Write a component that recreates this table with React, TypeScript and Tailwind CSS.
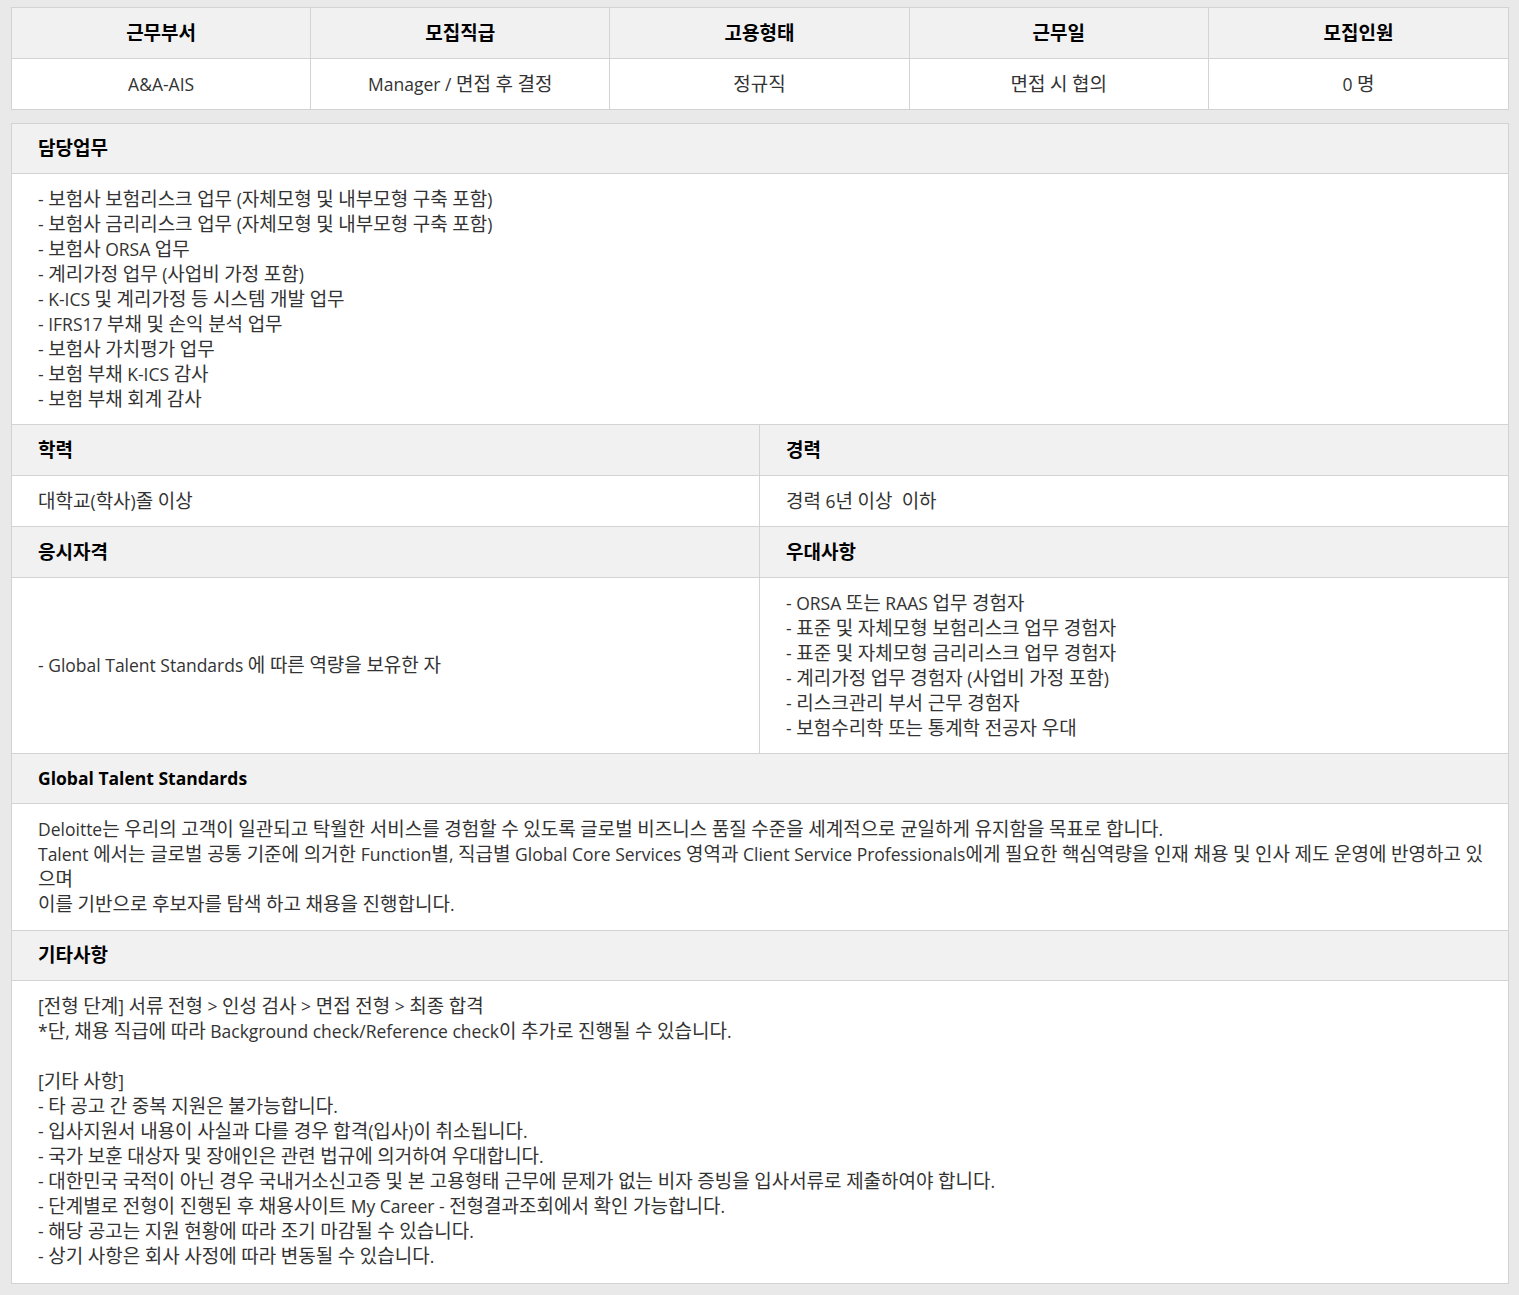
import React from 'react';

const font = { fontFamily: '"Open Sans", "Noto Sans CJK KR", sans-serif' };

const topHeads = ['근무부서', '모집직급', '고용형태', '근무일', '모집인원'];
const topValues = ['A&A-AIS', 'Manager / 면접 후 결정', '정규직', '면접 시 협의', '0 명'];

const duties = [
  '- 보험사 보험리스크 업무 (자체모형 및 내부모형 구축 포함)',
  '- 보험사 금리리스크 업무 (자체모형 및 내부모형 구축 포함)',
  '- 보험사 ORSA 업무',
  '- 계리가정 업무 (사업비 가정 포함)',
  '- K-ICS 및 계리가정 등 시스템 개발 업무',
  '- IFRS17 부채 및 손익 분석 업무',
  '- 보험사 가치평가 업무',
  '- 보험 부채 K-ICS 감사',
  '- 보험 부채 회계 감사',
];

const prefs = [
  '- ORSA 또는 RAAS 업무 경험자',
  '- 표준 및 자체모형 보험리스크 업무 경험자',
  '- 표준 및 자체모형 금리리스크 업무 경험자',
  '- 계리가정 업무 경험자 (사업비 가정 포함)',
  '- 리스크관리 부서 근무 경험자',
  '- 보험수리학 또는 통계학 전공자 우대',
];

const gts = [
  'Deloitte는 우리의 고객이 일관되고 탁월한 서비스를 경험할 수 있도록 글로벌 비즈니스 품질 수준을 세계적으로 균일하게 유지함을 목표로 합니다.',
  'Talent 에서는 글로벌 공통 기준에 의거한 Function별, 직급별 Global Core Services 영역과 Client Service Professionals에게 필요한 핵심역량을 인재 채용 및 인사 제도 운영에 반영하고 있',
  '으며',
  '이를 기반으로 후보자를 탐색 하고 채용을 진행합니다.',
];

const etc = [
  '[전형 단계] 서류 전형 > 인성 검사 > 면접 전형 > 최종 합격',
  '*단, 채용 직급에 따라 Background check/Reference check이 추가로 진행될 수 있습니다.',
  '',
  '[기타 사항]',
  '- 타 공고 간 중복 지원은 불가능합니다.',
  '- 입사지원서 내용이 사실과 다를 경우 합격(입사)이 취소됩니다.',
  '- 국가 보훈 대상자 및 장애인은 관련 법규에 의거하여 우대합니다.',
  '- 대한민국 국적이 아닌 경우 국내거소신고증 및 본 고용형태 근무에 문제가 없는 비자 증빙을 입사서류로 제출하여야 합니다.',
  '- 단계별로 전형이 진행된 후 채용사이트 My Career - 전형결과조회에서 확인 가능합니다.',
  '- 해당 공고는 지원 현황에 따라 조기 마감될 수 있습니다.',
  '- 상기 사항은 회사 사정에 따라 변동될 수 있습니다.',
];

// hangul glyphs in the shot are larger than the latin ones, so size them apart
const K = (text: string) =>
  text.split(/([\uAC00-\uD7A3\u3131-\u318E]+)/).map((part, i) =>
    i % 2 === 1 ? (
      <span key={i} className="text-[19px] leading-none">{part}</span>
    ) : (
      part
    )
  );

const Head: React.FC<{ text: string; className?: string }> = ({ text, className = '' }) => (
  <div className={`bg-[#f1f1f1] h-[50px] flex items-center px-[26px] font-bold text-black ${className}`}>
    <span>{K(text)}</span>
  </div>
);

const Lines: React.FC<{ lines: string[]; className?: string }> = ({ lines, className = 'py-[12.5px]' }) => (
  <div className={`px-[26px] ${className}`}>
    {lines.map((l, i) => (
      <div key={i} className="h-[25px] whitespace-nowrap">{K(l)}</div>
    ))}
  </div>
);

const App: React.FC = () => {
  return (
    <div style={font} className="bg-[#e8e9e8] min-h-[1295px] pl-[11px] pr-[10px] pt-[7px] pb-[12px] text-[17.5px] leading-[25px] text-[#333]">
      <div className="border border-[#d3d3d3] bg-white">
        <div className="grid grid-cols-5 border-b border-[#d3d3d3]">
          {topHeads.map((h, i) => (
            <div key={h} className={`bg-[#f1f1f1] h-[50px] flex items-center justify-center font-bold text-black ${i < 4 ? 'border-r border-[#d3d3d3]' : ''}`}>
              <span>{K(h)}</span>
            </div>
          ))}
        </div>
        <div className="grid grid-cols-5">
          {topValues.map((v, i) => (
            <div key={v} className={`h-[50px] flex items-center justify-center ${i < 4 ? 'border-r border-[#d3d3d3]' : ''}`}>
              <span>{K(v)}</span>
            </div>
          ))}
        </div>
      </div>

      <div className="mt-[13px] border border-[#d3d3d3] bg-white">
        <Head text="담당업무" className="border-b border-[#d3d3d3]" />
        <div className="border-b border-[#d3d3d3]">
          <Lines lines={duties} />
        </div>

        <div className="grid grid-cols-2 border-b border-[#d3d3d3]">
          <Head text="학력" className="border-r border-[#d3d3d3]" />
          <Head text="경력" />
        </div>
        <div className="grid grid-cols-2 border-b border-[#d3d3d3]">
          <div className="h-[50px] flex items-center px-[26px] border-r border-[#d3d3d3]"><span>{K('대학교(학사)졸 이상')}</span></div>
          <div className="h-[50px] flex items-center px-[26px] whitespace-pre"><span>{K('경력 6년 이상  이하')}</span></div>
        </div>
        <div className="grid grid-cols-2 border-b border-[#d3d3d3]">
          <Head text="응시자격" className="border-r border-[#d3d3d3]" />
          <Head text="우대사항" />
        </div>
        <div className="grid grid-cols-2 border-b border-[#d3d3d3]">
          <div className="flex items-center px-[26px] border-r border-[#d3d3d3]"><span>{K('- Global Talent Standards 에 따른 역량을 보유한 자')}</span></div>
          <Lines lines={prefs} />
        </div>

        <Head text="Global Talent Standards" className="border-b border-[#d3d3d3]" />
        <div className="border-b border-[#d3d3d3]">
          <Lines lines={gts} className="py-[13px]" />
        </div>

        <Head text="기타사항" className="border-b border-[#d3d3d3]" />
        <Lines lines={etc} className="pt-[12.5px] pb-[14px]" />
      </div>
    </div>
  );
};

export default App;
